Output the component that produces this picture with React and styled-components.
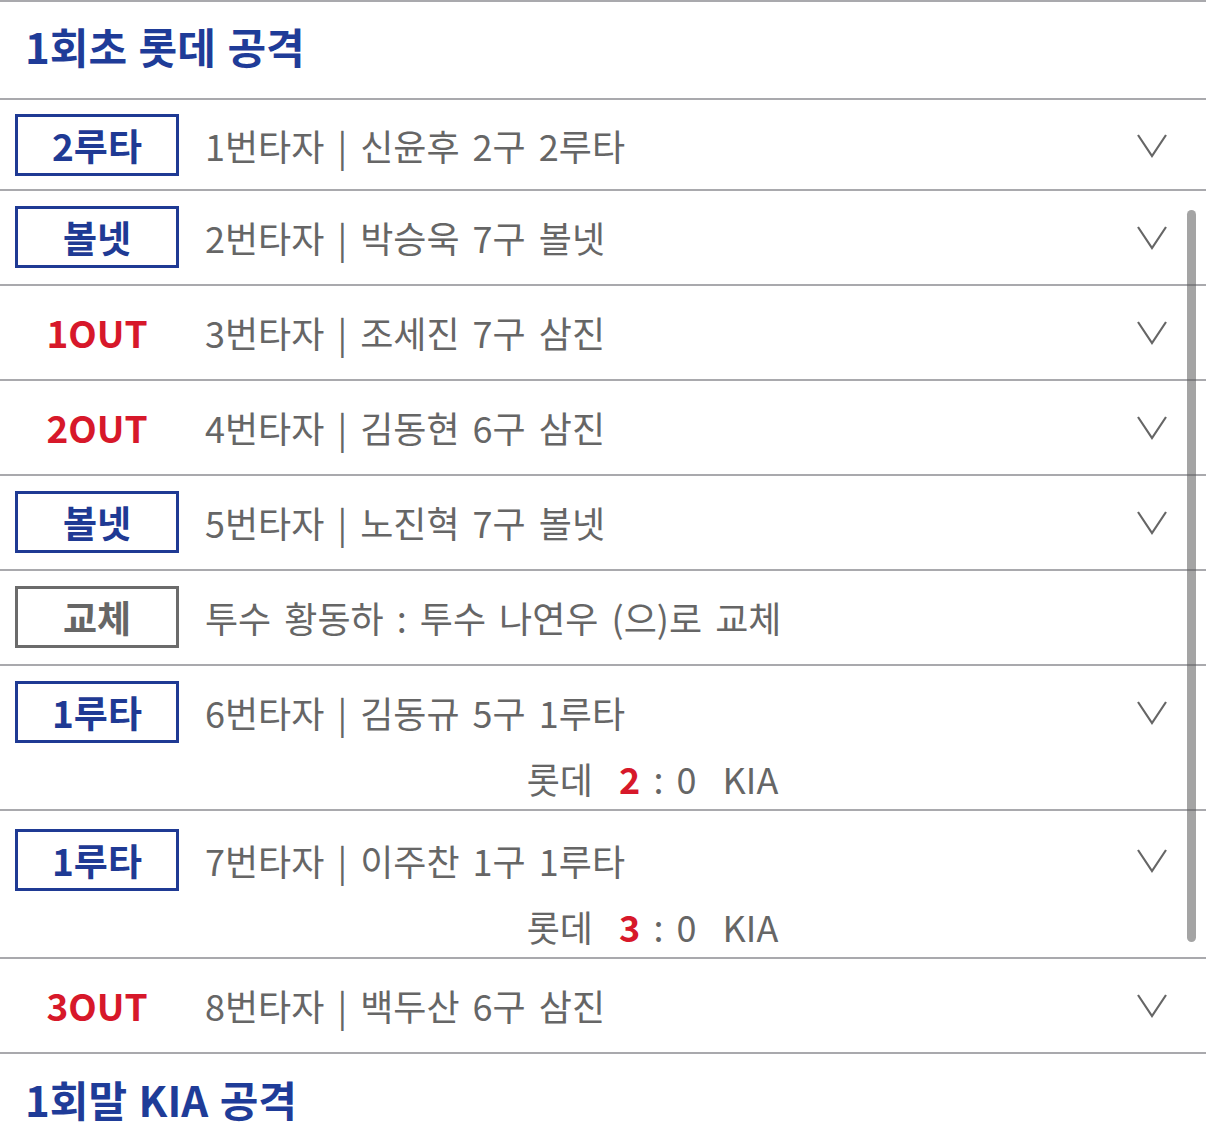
import React from "react";
import styled, { createGlobalStyle } from "styled-components";

const GlobalStyle = createGlobalStyle`
  body {
    margin: 0;
    background: #ffffff;
    font-family: "Noto Sans CJK KR", "Noto Sans", sans-serif;
  }
`;

const Page = styled.div`
  position: relative;
  width: 1206px;
  height: 1145px;
  overflow: hidden;
  background: #fff;
  border-top: 2px solid #a9a9ad;
  box-sizing: border-box;
`;

const InningTitle = styled.div`
  height: 98px;
  box-sizing: border-box;
  padding: 0 0 10px 25px;
  display: flex;
  align-items: center;
  font-size: 42px;
  font-weight: 700;
  color: #1f3c98;
  word-spacing: 2px;
  border-bottom: ${(p) => (p.last ? "none" : "2px solid #a9a9ad")};
`;

const Row = styled.div`
  display: flex;
  flex-direction: column;
  padding: ${(p) => (p.first ? "14px 0 13px" : p.withScore ? `${p.padTop || 15}px 0 5px` : "15px 0 16px")};
  border-bottom: 2px solid #a9a9ad;
`;

const MainLine = styled.div`
  display: flex;
  align-items: center;
  height: 62px;
`;

const Badge = styled.div`
  width: 164px;
  height: 62px;
  margin-left: 15px;
  box-sizing: border-box;
  display: flex;
  align-items: center;
  justify-content: center;
  font-size: 37px;
  font-weight: 700;
  color: ${(p) => (p.kind === "out" ? "#d7182a" : p.kind === "sub" ? "#666" : "#1f3a94")};
  border: ${(p) =>
    p.kind === "out" ? "3px solid transparent" : p.kind === "sub" ? "3px solid #6b6b6b" : "3px solid #1f3a94"};
`;

const Desc = styled.div`
  flex: 1;
  margin-left: 26px;
  font-size: 36px;
  word-spacing: 5px;
  color: #666;
  white-space: nowrap;
`;

const Chevron = styled.div`
  width: 32px;
  height: 26px;
  margin-right: 38px;
  display: flex;
  align-items: center;
  justify-content: center;
`;

const ScoreLine = styled.div`
  height: 52px;
  margin-top: 9px;
  margin-left: 205px;
  margin-right: 106px;
  display: flex;
  align-items: center;
  justify-content: center;
  font-size: 36px;
  word-spacing: 5px;
  color: #666;
  white-space: pre;
`;

const ScoreHot = styled.span`
  color: #d7182a;
  font-weight: 700;
`;

const Scrollbar = styled.div`
  position: absolute;
  right: 10px;
  top: 208px;
  width: 9px;
  height: 732px;
  border-radius: 5px;
  background: rgba(90, 90, 90, 0.55);
`;

const Arrow = () => (
  <Chevron>
    <svg width="32" height="26" viewBox="0 0 32 26">
      <polyline points="2,3 16,24 30,3" fill="none" stroke="#666" strokeWidth="2.2" />
    </svg>
  </Chevron>
);

const plays = [
  { label: "2루타", kind: "hit", text: "1번타자 | 신윤후 2구 2루타" },
  { label: "볼넷", kind: "hit", text: "2번타자 | 박승욱 7구 볼넷" },
  { label: "1OUT", kind: "out", text: "3번타자 | 조세진 7구 삼진" },
  { label: "2OUT", kind: "out", text: "4번타자 | 김동현 6구 삼진" },
  { label: "볼넷", kind: "hit", text: "5번타자 | 노진혁 7구 볼넷" },
  { label: "교체", kind: "sub", text: "투수 황동하 : 투수 나연우 (으)로 교체", noArrow: true },
  { label: "1루타", kind: "hit", text: "6번타자 | 김동규 5구 1루타", score: "2" },
  { label: "1루타", kind: "hit", text: "7번타자 | 이주찬 1구 1루타", score: "3", padTop: 18 },
  { label: "3OUT", kind: "out", text: "8번타자 | 백두산 6구 삼진" },
];

export default function App() {
  return (
    <Page>
      <GlobalStyle />
      <InningTitle>1회초 롯데 공격</InningTitle>
      {plays.map((p, i) => (
        <Row key={i} first={i === 0} withScore={!!p.score} padTop={p.padTop}>
          <MainLine>
            <Badge kind={p.kind}>{p.label}</Badge>
            <Desc>{p.text}</Desc>
            {!p.noArrow && <Arrow />}
          </MainLine>
          {p.score && (
            <ScoreLine>
              {"롯데  "}
              <ScoreHot>{p.score}</ScoreHot>
              {" : 0  KIA"}
            </ScoreLine>
          )}
        </Row>
      ))}
      <InningTitle last>1회말 KIA 공격</InningTitle>
      <Scrollbar />
    </Page>
  );
}
